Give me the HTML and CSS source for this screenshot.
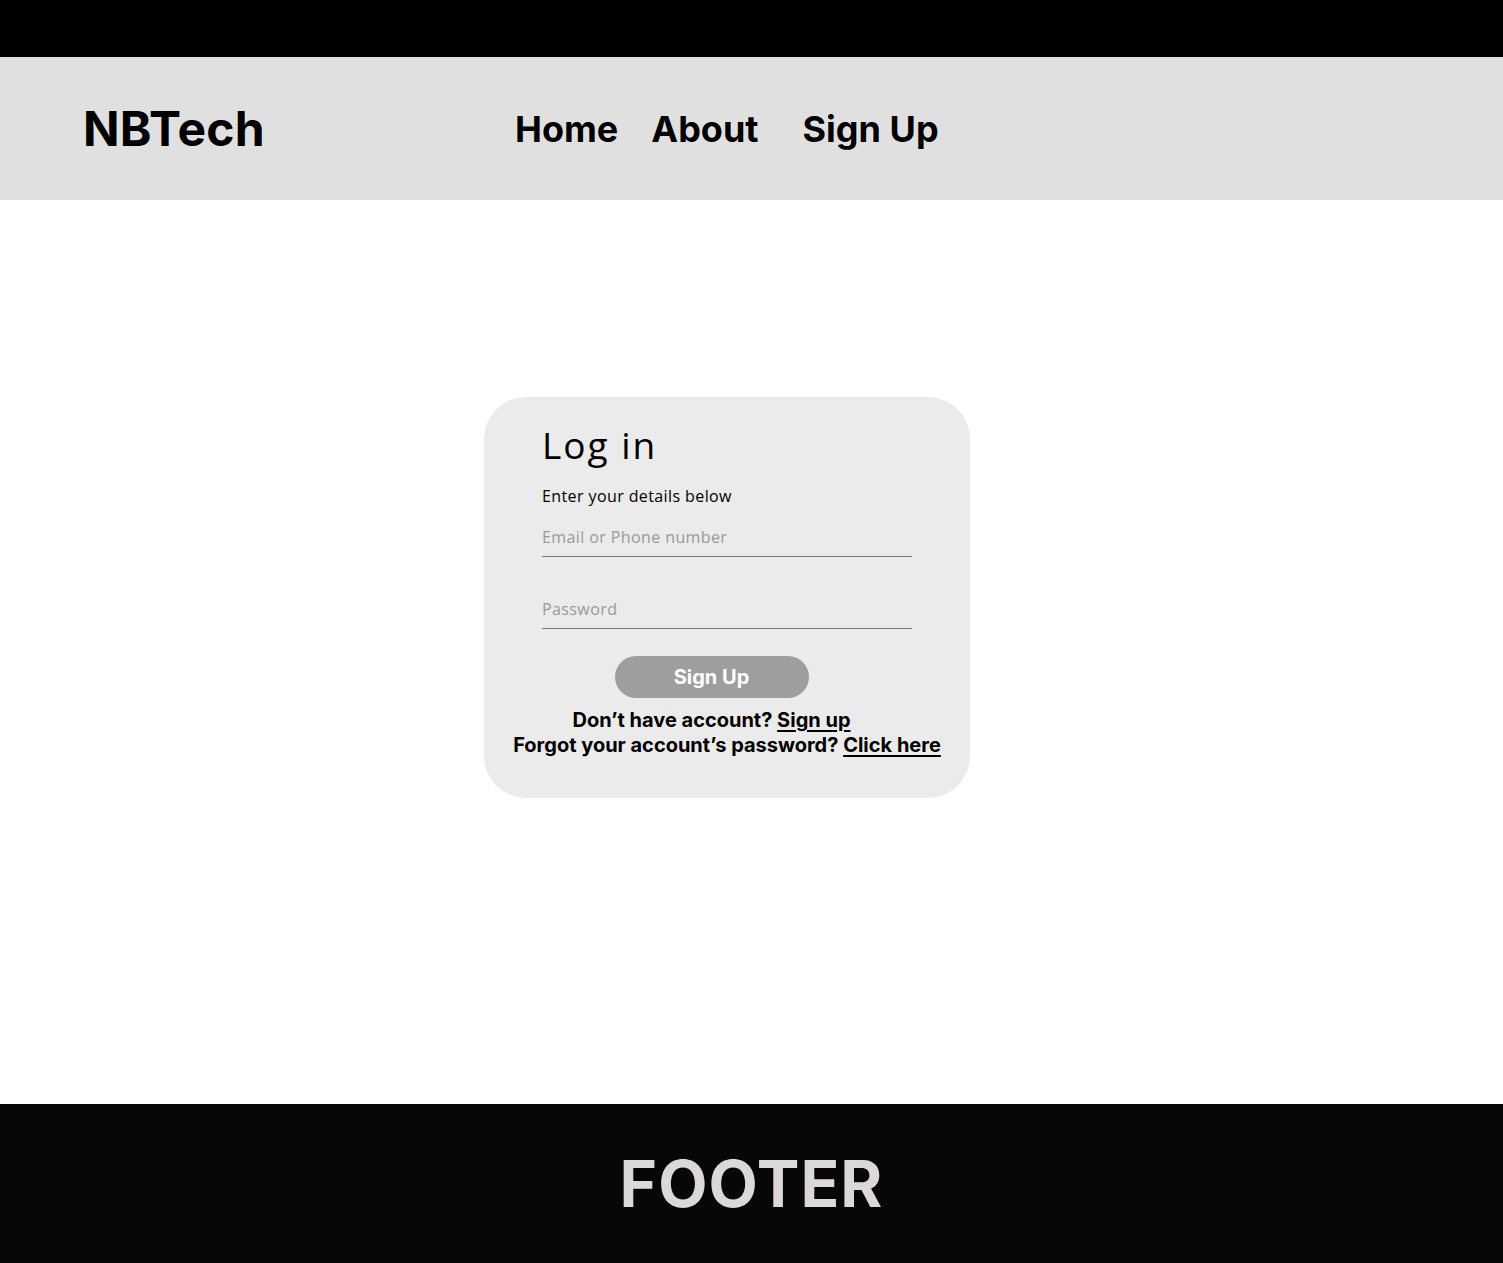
FILE: index.html
```html
<!DOCTYPE html>
<html lang="en">
<head>
<meta charset="utf-8">
<title>NBTech - Log in</title>
<link rel="stylesheet" href="styles.css">
</head>
<body>
<div class="topbar"></div>
<header class="nav">
  <div class="logo">NBTech</div>
  <nav class="links">
    <a class="link home" href="#">Home</a>
    <a class="link about" href="#">About</a>
    <a class="link" href="#">Sign Up</a>
  </nav>
</header>
<main class="main">
  <form class="card">
    <h1 class="title">Log in</h1>
    <p class="sub">Enter your details below</p>
    <input class="field" type="text" placeholder="Email or Phone number">
    <input class="field pw" type="password" placeholder="Password">
    <button class="btn" type="button">Sign Up</button>
    <div class="foot">
      <p class="line first">Don’t have account? <a href="#">Sign up</a></p>
      <p class="line">Forgot your account’s password? <a href="#">Click here</a></p>
    </div>
  </form>
</main>
<footer class="footer">FOOTER</footer>
</body>
</html>
```
FILE: styles.css
```css
* { box-sizing: border-box; }
body { margin: 0; font-family: Inter, "Liberation Sans", sans-serif; background: #fff; }
.topbar { height: 57px; background: #000; }
.nav { height: 143px; background: #e0e0e0; display: flex; align-items: center; padding-left: 83px; }
.logo { font-size: 48px; font-weight: 700; color: #000; width: 432px; letter-spacing: 0.2px; }
.links { display: flex; align-items: center; }
.link { font-size: 36px; font-weight: 700; color: #000; text-decoration: none; }
.home { margin-right: 33px; }
.about { margin-right: 44px; }
.main { height: 904px; display: flex; justify-content: center; padding-top: 197px; padding-right: 49px; }
.card { width: 486px; height: 401px; background: #ebebeb; border-radius: 42px; padding: 24px 58px 0; display: flex; flex-direction: column; align-items: flex-start; }
.title { margin: 0; font-family: "Open Sans", sans-serif; font-weight: 500; font-size: 37px; letter-spacing: 2px; line-height: 48px; color: #000; }
.sub { margin: 16px 0 0; font-family: "Open Sans", sans-serif; font-size: 16px; line-height: 22px; letter-spacing: 0.4px; color: #000; }
.field { width: 370px; margin-top: 19px; border: 0; border-bottom: 1px solid #777; background: transparent; font-family: "Open Sans", sans-serif; font-size: 16px; letter-spacing: 0.4px; padding: 0 0 8px; outline: none; }
.field::placeholder { color: #999; }
.pw { margin-top: 41px; }
.btn { align-self: center; margin: 27px 0 0 -31px; width: 194px; height: 42px; border: 0; border-radius: 21px; background: #9e9e9e; color: #fff; font-family: Inter, sans-serif; font-weight: 700; font-size: 20px; }
.foot { align-self: stretch; margin: 10px -58px 0; text-align: center; font-family: Inter, sans-serif; font-weight: 700; font-size: 20px; line-height: 25px; color: #000; white-space: nowrap; }
.line { margin: 0; }
.first { padding-right: 31px; }
.foot a { color: #000; text-underline-offset: 3px; }
.footer { height: 159px; background: #070707; color: #dcd8d8; display: flex; align-items: center; justify-content: center; font-size: 64px; font-weight: 700; letter-spacing: 1px; }
```
